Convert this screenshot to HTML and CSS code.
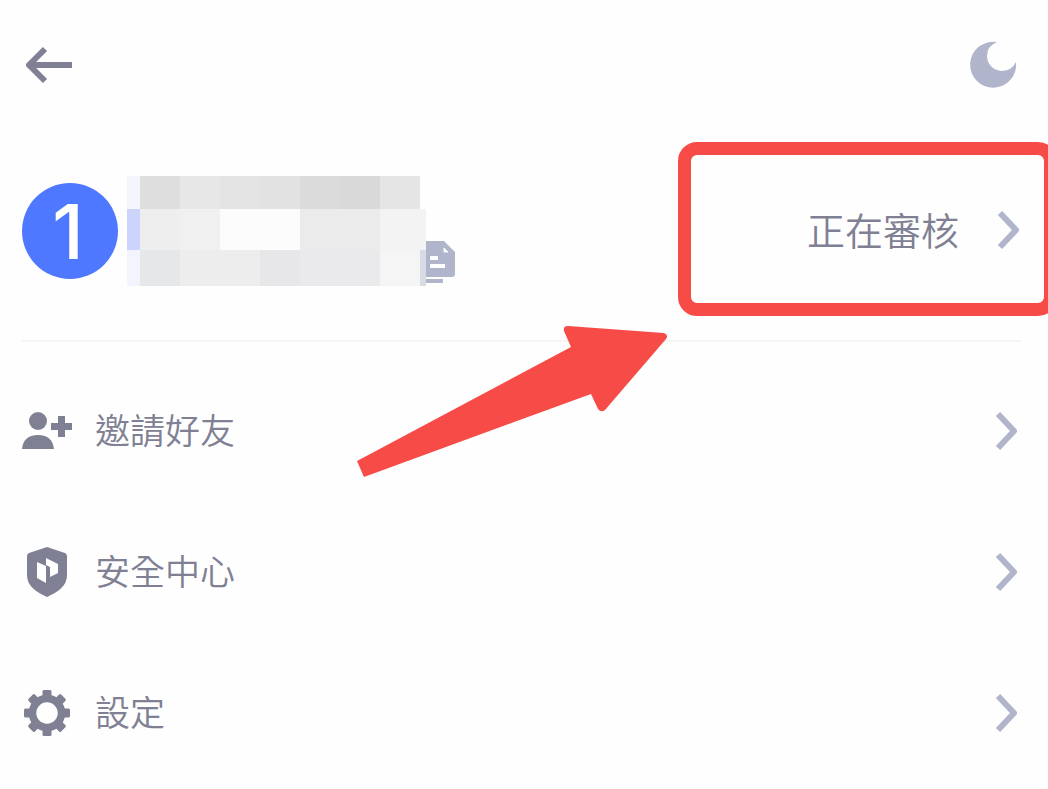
FILE: index.html
```html
<!DOCTYPE html>
<html lang="zh-Hant">
  <head>
    <meta charset="UTF-8" />
    <meta name="viewport" content="width=device-width, initial-scale=1.0" />
    <title>帳戶</title>
    <link rel="stylesheet" href="styles.css">
  </head>
  <body>
    <header class="topbar">
      <button type="button" class="icon-btn" aria-label="返回">
        <svg width="52" height="40" viewBox="0 0 52 40" fill="none" stroke="#7f8093" stroke-width="6">
          <path d="M50 20H8M23 4 7 20l16 16" stroke-linejoin="round" />
        </svg>
      </button>
      <button type="button" class="icon-btn" aria-label="深色模式">
        <svg width="52" height="48" viewBox="0 0 52 48" fill="#b1b5cb">
          <path d="M28 1A23 23 0 1 0 47 21A16 16 0 0 1 33 30A15 15 0 0 1 18 15Q18 5 28 1Z" />
        </svg>
      </button>
    </header>

    <main>
      <section class="profile">
        <div class="avatar">1</div>
        <!-- masked account name -->
        <svg class="mask" width="299" height="110" viewBox="0 0 299 110" role="img" aria-label="帳戶名稱">
          <g>
            <rect width="14" height="34" fill="#f5f6fd" />
            <rect x="13" width="41" height="34" fill="#dedede" />
            <rect x="53" width="41" height="34" fill="#e7e7e7" />
            <rect x="93" width="41" height="34" fill="#e4e4e4" />
            <rect x="133" width="41" height="34" fill="#e2e2e2" />
            <rect x="173" width="41" height="34" fill="#dbdbdb" />
            <rect x="213" width="41" height="34" fill="#d9d9d9" />
            <rect x="253" width="40" height="34" fill="#e5e5e5" />
          </g>
          <g>
            <rect y="33" width="14" height="41" fill="#ccd4fc" />
            <rect x="13" y="33" width="41" height="41" fill="#eeeeee" />
            <rect x="53" y="33" width="41" height="41" fill="#f0f0f0" />
            <rect x="93" y="33" width="81" height="41" fill="#fcfcfc" />
            <rect x="173" y="33" width="81" height="41" fill="#ebebeb" />
            <rect x="253" y="33" width="46" height="41" fill="#f3f3f3" />
          </g>
          <g>
            <rect y="74" width="14" height="36" fill="#f3f4fe" />
            <rect x="13" y="74" width="41" height="36" fill="#e6e7e9" />
            <rect x="53" y="74" width="81" height="36" fill="#ededed" />
            <rect x="133" y="74" width="41" height="36" fill="#e7e7ea" />
            <rect x="173" y="74" width="81" height="36" fill="#eaeaed" />
            <rect x="253" y="74" width="40" height="36" fill="#f5f5f5" />
            <rect x="293" y="74" width="6" height="36" fill="#d8dae4" />
          </g>
        </svg>
        <button type="button" class="copy" aria-label="複製">
          <svg width="29" height="45" viewBox="0 0 29 45">
            <path d="M0 0H18L29 11V33Q29 36 26 36H0Z" fill="#b1b5cb" />
            <path d="M18 7V11H22Z" fill="#fff" stroke="#fff" />
            <path d="M4 15H12V19H4ZM4 23H19V27H4Z" fill="#fff" />
            <path d="M0 38H17V42H0Z" fill="#b1b5cb" />
          </svg>
        </button>
        <a class="status" href="#">
          <span>正在審核</span>
          <svg class="chevron" width="24" height="40" viewBox="0 0 24 40"><path d="M3 3 19 20 3 37" /></svg>
        </a>

        <div class="highlight"></div>
        <svg class="pointer" width="312" height="152" viewBox="0 0 312 152">
          <path d="M1 135 215 21 208 5Q207 0 212 0L308 7Q313 9 310 13L249 84Q245 87 242 83L235 68 8 151Z" fill="#f74b47" />
        </svg>
      </section>

      <nav class="menu">
        <a class="menu-item" href="#">
          <svg width="52" height="52" viewBox="0 0 52 52" fill="#7f8093">
            <circle cx="16" cy="16" r="9" />
            <path d="M0 44C1 35 6 30 16 30S31 35 32 44ZM36 11H43V18H50V25H43V32H36V25H29V18H36Z" />
          </svg>
          <span>邀請好友</span>
          <svg class="chevron" width="24" height="40" viewBox="0 0 24 40"><path d="M3 3 19 20 3 37" /></svg>
        </a>
        <a class="menu-item" href="#">
          <svg width="52" height="52" viewBox="0 0 52 52">
            <path d="M25 1 43 7Q45 8 45 10V29C45 40 36 46 25 51C14 46 5 40 5 29V10Q5 8 7 7Z" fill="#7f8093" />
            <path d="M15 16 24 20V37L15 32ZM24 12 36 18V27L28 31V21L24 19Z" fill="#fff" />
          </svg>
          <span>安全中心</span>
          <svg class="chevron" width="24" height="40" viewBox="0 0 24 40"><path d="M3 3 19 20 3 37" /></svg>
        </a>
        <a class="menu-item" href="#">
          <svg width="52" height="52" viewBox="0 0 52 52" fill="#7f8093">
            <g transform="translate(25 26)">
              <circle r="14.5" fill="none" stroke="#7f8093" stroke-width="7.5" />
              <g id="teeth">
                <rect x="-4.5" y="-23" width="9" height="8" rx="1.5" />
                <rect x="-4.5" y="15" width="9" height="8" rx="1.5" />
                <rect x="-23" y="-4.5" width="8" height="9" rx="1.5" />
                <rect x="15" y="-4.5" width="8" height="9" rx="1.5" />
              </g>
              <use href="#teeth" transform="rotate(45)" />
            </g>
          </svg>
          <span>設定</span>
          <svg class="chevron" width="24" height="40" viewBox="0 0 24 40"><path d="M3 3 19 20 3 37" /></svg>
        </a>
      </nav>
    </main>
  </body>
</html>
```

FILE: styles.css
```css
* {
  box-sizing: border-box;
}

body {
  margin: 0;
  padding: 0 27px 0 22px;
  overflow-x: hidden;
  background: #fefefe;
  color: #7f8093;
  font-family: "Noto Sans CJK TC", sans-serif;
  font-weight: 350;
}

svg {
  display: block;
  flex: none;
}

a {
  color: inherit;
  text-decoration: none;
}

button {
  padding: 0;
  border: 0;
  background: none;
  cursor: pointer;
}

.topbar {
  display: flex;
  align-items: center;
  justify-content: space-between;
  height: 130px;
}

.profile {
  position: relative;
  display: flex;
  align-items: center;
  height: 212px;
  padding-bottom: 8px;
  border-bottom: 2px solid #f5f5f6;
}

.avatar {
  width: 96px;
  height: 96px;
  margin-right: 9px;
  padding-right: 4px;
  border-radius: 50%;
  background: #4e78ff;
  color: #fff;
  font: 500 76px/96px Inter, sans-serif;
  text-align: center;
}

.copy {
  align-self: flex-end;
  margin-bottom: 46px;
}

.status {
  display: flex;
  align-items: center;
  gap: 38px;
  margin-left: auto;
  padding-bottom: 2px;
  font-size: 38px;
}

.status span,
.menu-item span {
  padding-bottom: 4px;
}

.chevron {
  fill: none;
  stroke: #b1b5cb;
  stroke-width: 6px;
  stroke-linejoin: round;
}

/* callout drawn over the status link */
.highlight {
  position: absolute;
  top: 12px;
  right: -36px;
  width: 379px;
  height: 174px;
  border: 13px solid #f74b47;
  border-radius: 19px;
  pointer-events: none;
}

.pointer {
  position: absolute;
  top: 196px;
  right: 353px;
  pointer-events: none;
}

.menu {
  padding: 18px 2px 0 0;
}

.menu-item {
  display: flex;
  align-items: center;
  height: 141px;
  font-size: 35px;
}

.menu-item span {
  flex: 1;
  margin-left: 21px;
}
```
